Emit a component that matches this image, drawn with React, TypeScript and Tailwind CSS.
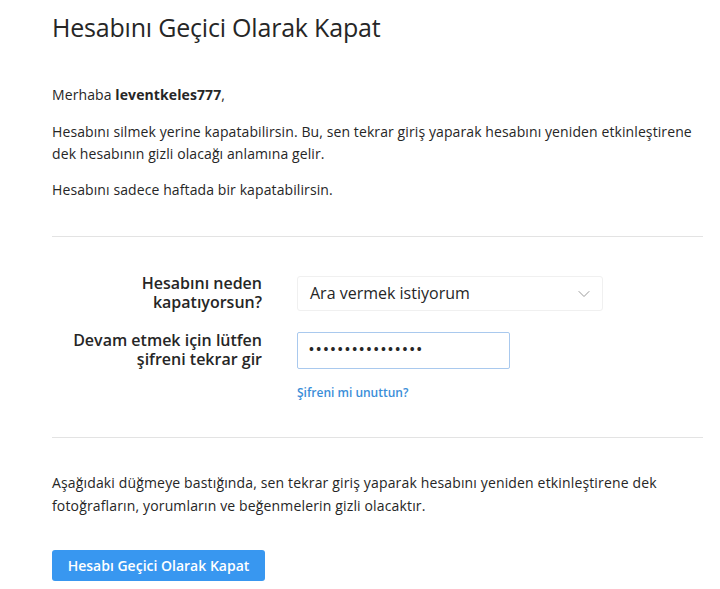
import { ChevronDown } from 'lucide-react';

export default function App() {
  return (
    <div className="min-h-screen bg-white font-['Open_Sans',sans-serif] text-[#262626]">
      <div className="pl-[52px] pr-[17px] pt-[8px]">
        {/* Title */}
        <h1 className="text-[25px] leading-[38px] font-normal tracking-[-0.2px]">
          Hesabını Geçici Olarak Kapat
        </h1>

        {/* Intro */}
        <p className="mt-[38px] text-[14px] leading-[22px] tracking-[0.1px]">
          Merhaba <span className="font-bold">leventkeles777</span>,
        </p>
        <p className="mt-[15px] text-[14px] leading-[22px] tracking-[0.1px]">
          Hesabını silmek yerine kapatabilirsin. Bu, sen tekrar giriş yaparak hesabını yeniden etkinleştirene dek
          hesabının gizli olacağı anlamına gelir.
        </p>
        <p className="mt-[14px] text-[14px] leading-[22px] tracking-[0.1px]">Hesabını sadece haftada bir kapatabilirsin.</p>

        <div className="mt-[35px] h-px bg-[#e3e3e3]" />

        {/* Form */}
        <div className="pt-[37px] flex flex-col gap-[19px]">
          <div className="flex items-center gap-[35px]">
            <label className="w-[210px] text-right text-[16px] leading-[19px] font-semibold">
              Hesabını neden
              <br />
              kapatıyorsun?
            </label>
            <div className="relative w-[306px] h-[35px] border border-[#f0f0f0] rounded-[3px] flex items-center pl-[12px]">
              <span className="text-[16px]">Ara vermek istiyorum</span>
              <ChevronDown className="absolute right-[8px] top-[7px] w-[20px] h-[20px] text-[#9a9a9a]" strokeWidth={1.2} />
            </div>
          </div>
          <div className="flex items-center gap-[35px]">
            <label className="w-[210px] text-right text-[16px] leading-[19px] font-semibold">
              Devam etmek için lütfen
              <br />
              şifreni tekrar gir
            </label>
            <div className="w-[213px] h-[37px] border border-[#a9c9ee] rounded-[2px] flex items-center pl-[11px]">
              <span className="text-[13px] tracking-[2.3px] font-bold">••••••••••••••••</span>
            </div>
          </div>
        </div>
        <div className="pl-[245px] mt-[10px]">
          <a className="text-[12px] font-semibold text-[#3b8ed8]">Şifreni mi unuttun?</a>
        </div>

        <div className="mt-[34px] h-px bg-[#e3e3e3]" />

        {/* Final */}
        <p className="mt-[33px] text-[14px] leading-[23px] tracking-[0.15px]">
          Aşağıdaki düğmeye bastığında, sen tekrar giriş yaparak hesabını yeniden etkinleştirene dek fotoğrafların,
          yorumların ve beğenmelerin gizli olacaktır.
        </p>
        <button className="mt-[33px] w-[213px] h-[31px] rounded-[3px] bg-[#3897f0] text-white text-[14px] font-semibold">
          Hesabı Geçici Olarak Kapat
        </button>
      </div>
    </div>
  );
}
